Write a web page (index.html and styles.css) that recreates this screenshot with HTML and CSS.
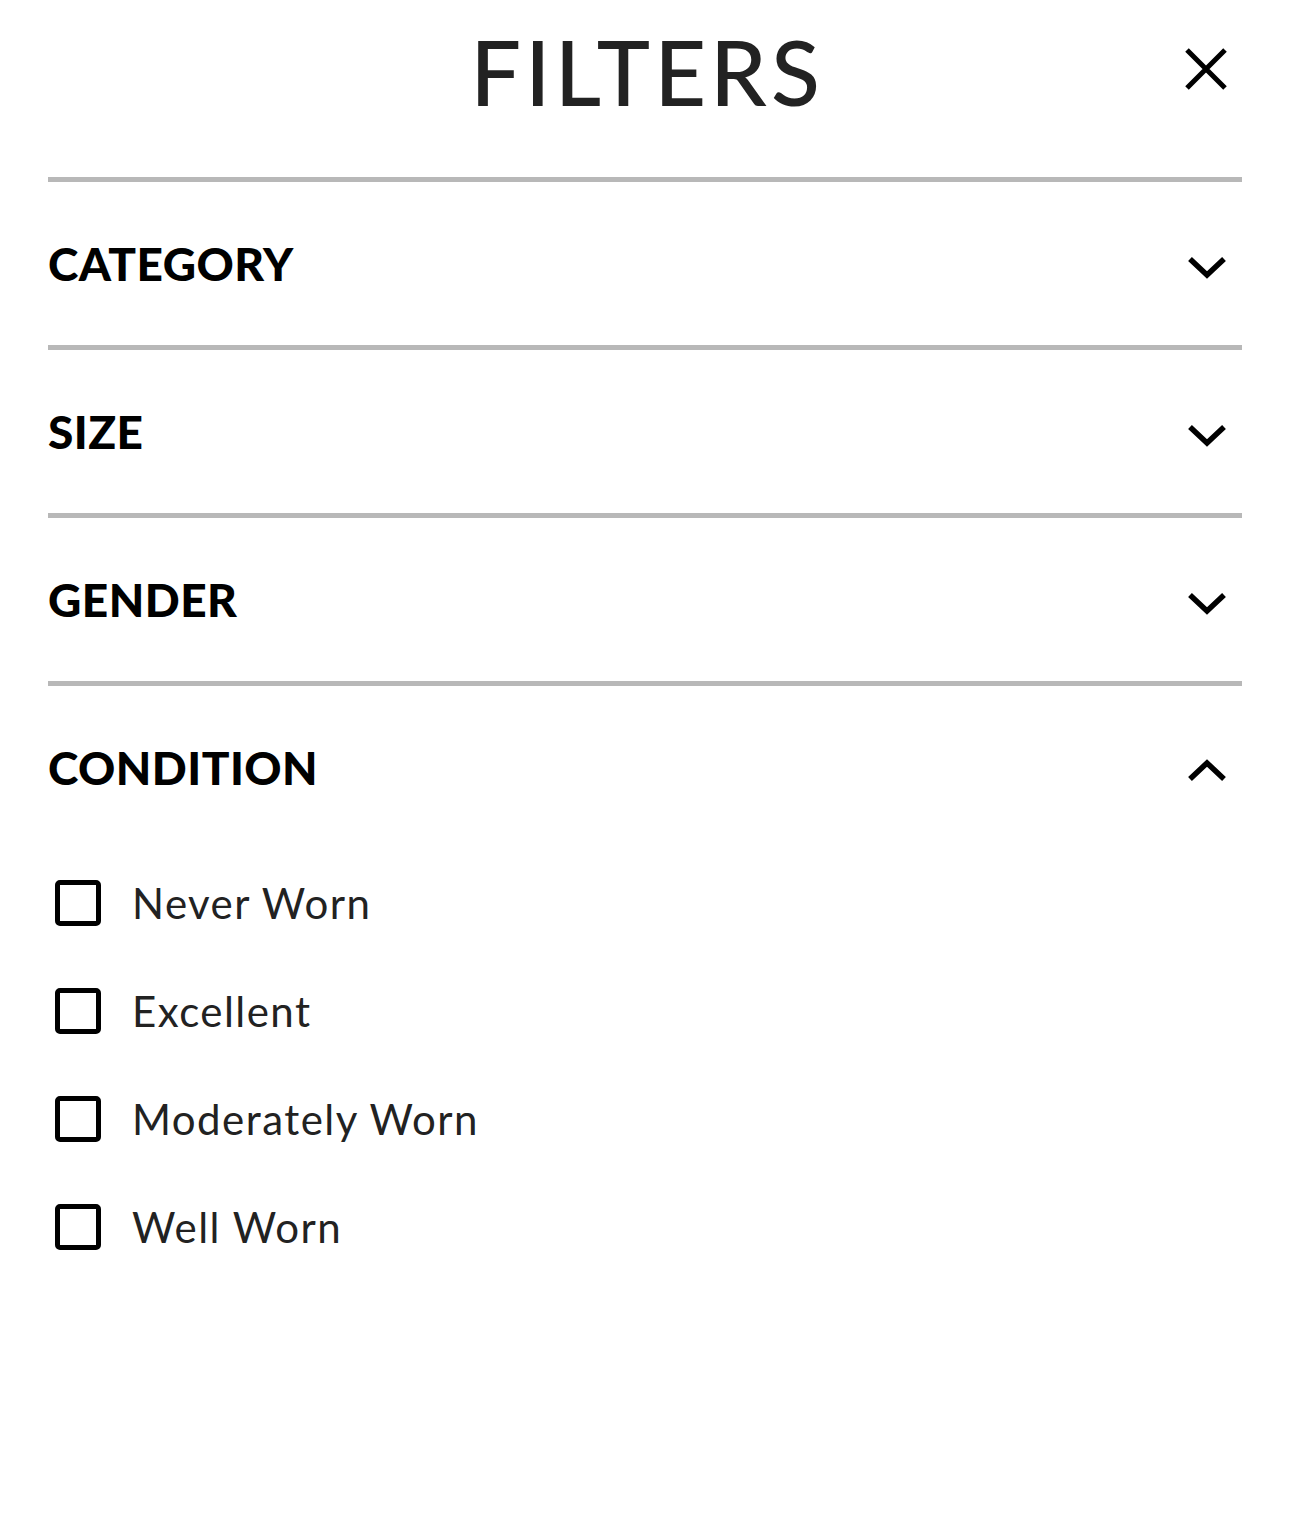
FILE: index.html
```html
<!DOCTYPE html>
<html lang="en">
<head>
<meta charset="utf-8">
<title>Filters</title>
<link rel="stylesheet" href="styles.css">
</head>
<body>
<div class="panel">
  <header class="top">
    <h1 class="title">FILTERS</h1>
    <button class="close" aria-label="Close">
      <svg width="44" height="44" viewBox="0 0 44 44"><path d="M3 3 L41 41 M41 3 L3 41" stroke="#000" stroke-width="5" fill="none"/></svg>
    </button>
  </header>

  <section class="group">
    <div class="group-head">
      <span class="group-title">CATEGORY</span>
      <svg class="chev" width="40" height="26" viewBox="0 0 40 26"><path d="M3 5 L20 21 L37 5" stroke="#000" stroke-width="5.5" fill="none"/></svg>
    </div>
  </section>

  <section class="group">
    <div class="group-head">
      <span class="group-title">SIZE</span>
      <svg class="chev" width="40" height="26" viewBox="0 0 40 26"><path d="M3 5 L20 21 L37 5" stroke="#000" stroke-width="5.5" fill="none"/></svg>
    </div>
  </section>

  <section class="group">
    <div class="group-head">
      <span class="group-title">GENDER</span>
      <svg class="chev" width="40" height="26" viewBox="0 0 40 26"><path d="M3 5 L20 21 L37 5" stroke="#000" stroke-width="5.5" fill="none"/></svg>
    </div>
  </section>

  <section class="group open">
    <div class="group-head">
      <span class="group-title">CONDITION</span>
      <svg class="chev" width="40" height="26" viewBox="0 0 40 26"><path d="M3 21 L20 5 L37 21" stroke="#000" stroke-width="5.5" fill="none"/></svg>
    </div>
    <ul class="options">
      <li class="option"><span class="box"></span><span class="label">Never Worn</span></li>
      <li class="option"><span class="box"></span><span class="label">Excellent</span></li>
      <li class="option"><span class="box"></span><span class="label">Moderately Worn</span></li>
      <li class="option"><span class="box"></span><span class="label">Well Worn</span></li>
    </ul>
  </section>
</div>
</body>
</html>
```
FILE: styles.css
```css
* { box-sizing: border-box; }
html, body { margin: 0; padding: 0; background: #fff; }
body { font-family: "Lato", "Noto Sans", sans-serif; color: #222; }

.panel {
  padding: 0 48px;
}

.top {
  height: 177px;
  display: flex;
  align-items: center;
  justify-content: center;
  position: relative;
}

.title {
  margin: 0;
  margin-top: -36px;
  font-weight: 500;
  font-size: 90px;
  letter-spacing: 0.045em;
  line-height: 1;
  color: #222;
  padding-left: 0.045em;
}

.close {
  position: absolute;
  right: 14px;
  top: 47px;
  background: none;
  border: 0;
  padding: 0;
  width: 44px;
  height: 44px;
  cursor: pointer;
}
.close svg { display: block; }

.group {
  border-top: 5px solid #b8b8b8;
}

.group-head {
  height: 163px;
  display: flex;
  align-items: center;
  justify-content: space-between;
  padding-right: 15px;
}

.group-title {
  font-weight: 900;
  font-size: 46px;
  letter-spacing: 0.01em;
  color: #000;
  line-height: 1;
}

.chev { display: block; margin-top: 6px; }

.options {
  list-style: none;
  margin: 0;
  padding: 0 0 0 7px;
}

.option {
  height: 108px;
  display: flex;
  align-items: center;
  gap: 31px;
}

.box {
  width: 46px;
  height: 46px;
  border: 5px solid #000;
  border-radius: 5px;
  flex: none;
}

.label {
  font-size: 42px;
  font-weight: 400;
  letter-spacing: 0.035em;
  color: #222;
  line-height: 1;
}
```
